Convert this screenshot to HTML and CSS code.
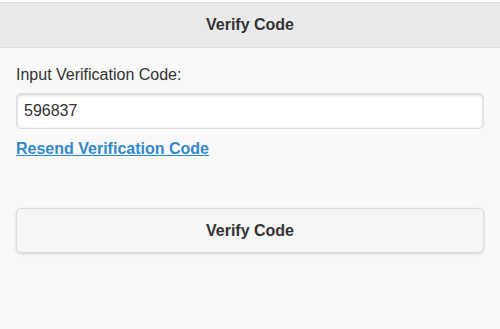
FILE: index.html
```html
<!DOCTYPE html>
<html lang="en">
<head>
<meta charset="UTF-8">
<meta name="viewport" content="width=device-width, initial-scale=1.0">
<title>Verify Code</title>
<link rel="stylesheet" href="styles.css">
</head>
<body>
  <!-- Page header -->
  <div class="header">
    <h1>Verify Code</h1>
  </div>

  <!-- Verification form -->
  <div class="content">
    <label class="field-label" for="code">Input Verification Code:</label>
    <div class="input-wrap">
      <input type="text" id="code" value="596837">
    </div>
    <a href="#" class="resend-link">Resend Verification Code</a>

    <button class="verify-btn" type="button">Verify Code</button>
  </div>
</body>
</html>
```

FILE: styles.css
```css
body {
margin: 0;
padding: 0;
font-family: 'Liberation Sans', Arial, sans-serif;
font-size: 16px;
color: #333;
background: #f9f9f9;
min-height: 100vh;
}

.header {
margin-top: 2px;
background: #e9e9e9;
border-top: 1px solid #ddd;
border-bottom: 1px solid #ddd;
text-align: center;
}

.header h1 {
margin: 0 30%;
padding: 11px 0;
font-size: 16px;
line-height: 22px;
font-weight: bold;
text-shadow: 0 1px 0 #eee;
}

.content {
padding: 16px;
}

.field-label {
display: block;
line-height: 21px;
margin-bottom: 8px;
text-shadow: 0 1px 0 #f3f3f3;
}

.input-wrap {
background: #fff;
border: 1px solid #ddd;
border-radius: 5px;
box-shadow: inset 0 1px 3px rgba(0, 0, 0, 0.2);
}

.input-wrap input {
display: block;
width: 100%;
box-sizing: border-box;
border: none;
background: transparent;
padding: 6px 7px;
font-family: inherit;
font-size: 16px;
line-height: 22px;
color: #333;
outline: none;
}

.resend-link {
display: inline-block;
margin-top: 9px;
line-height: 21px;
color: #3388cc;
font-weight: bold;
text-decoration: underline;
}

.verify-btn {
display: block;
width: 100%;
margin-top: 49px;
padding: 11px 16px;
background: #f6f6f6;
border: 1px solid #ddd;
border-radius: 5px;
box-shadow: 0 1px 3px rgba(0, 0, 0, 0.15);
font-family: inherit;
font-size: 16px;
font-weight: bold;
line-height: 21px;
color: #333;
text-shadow: 0 1px 0 #f3f3f3;
cursor: pointer;
}
```
